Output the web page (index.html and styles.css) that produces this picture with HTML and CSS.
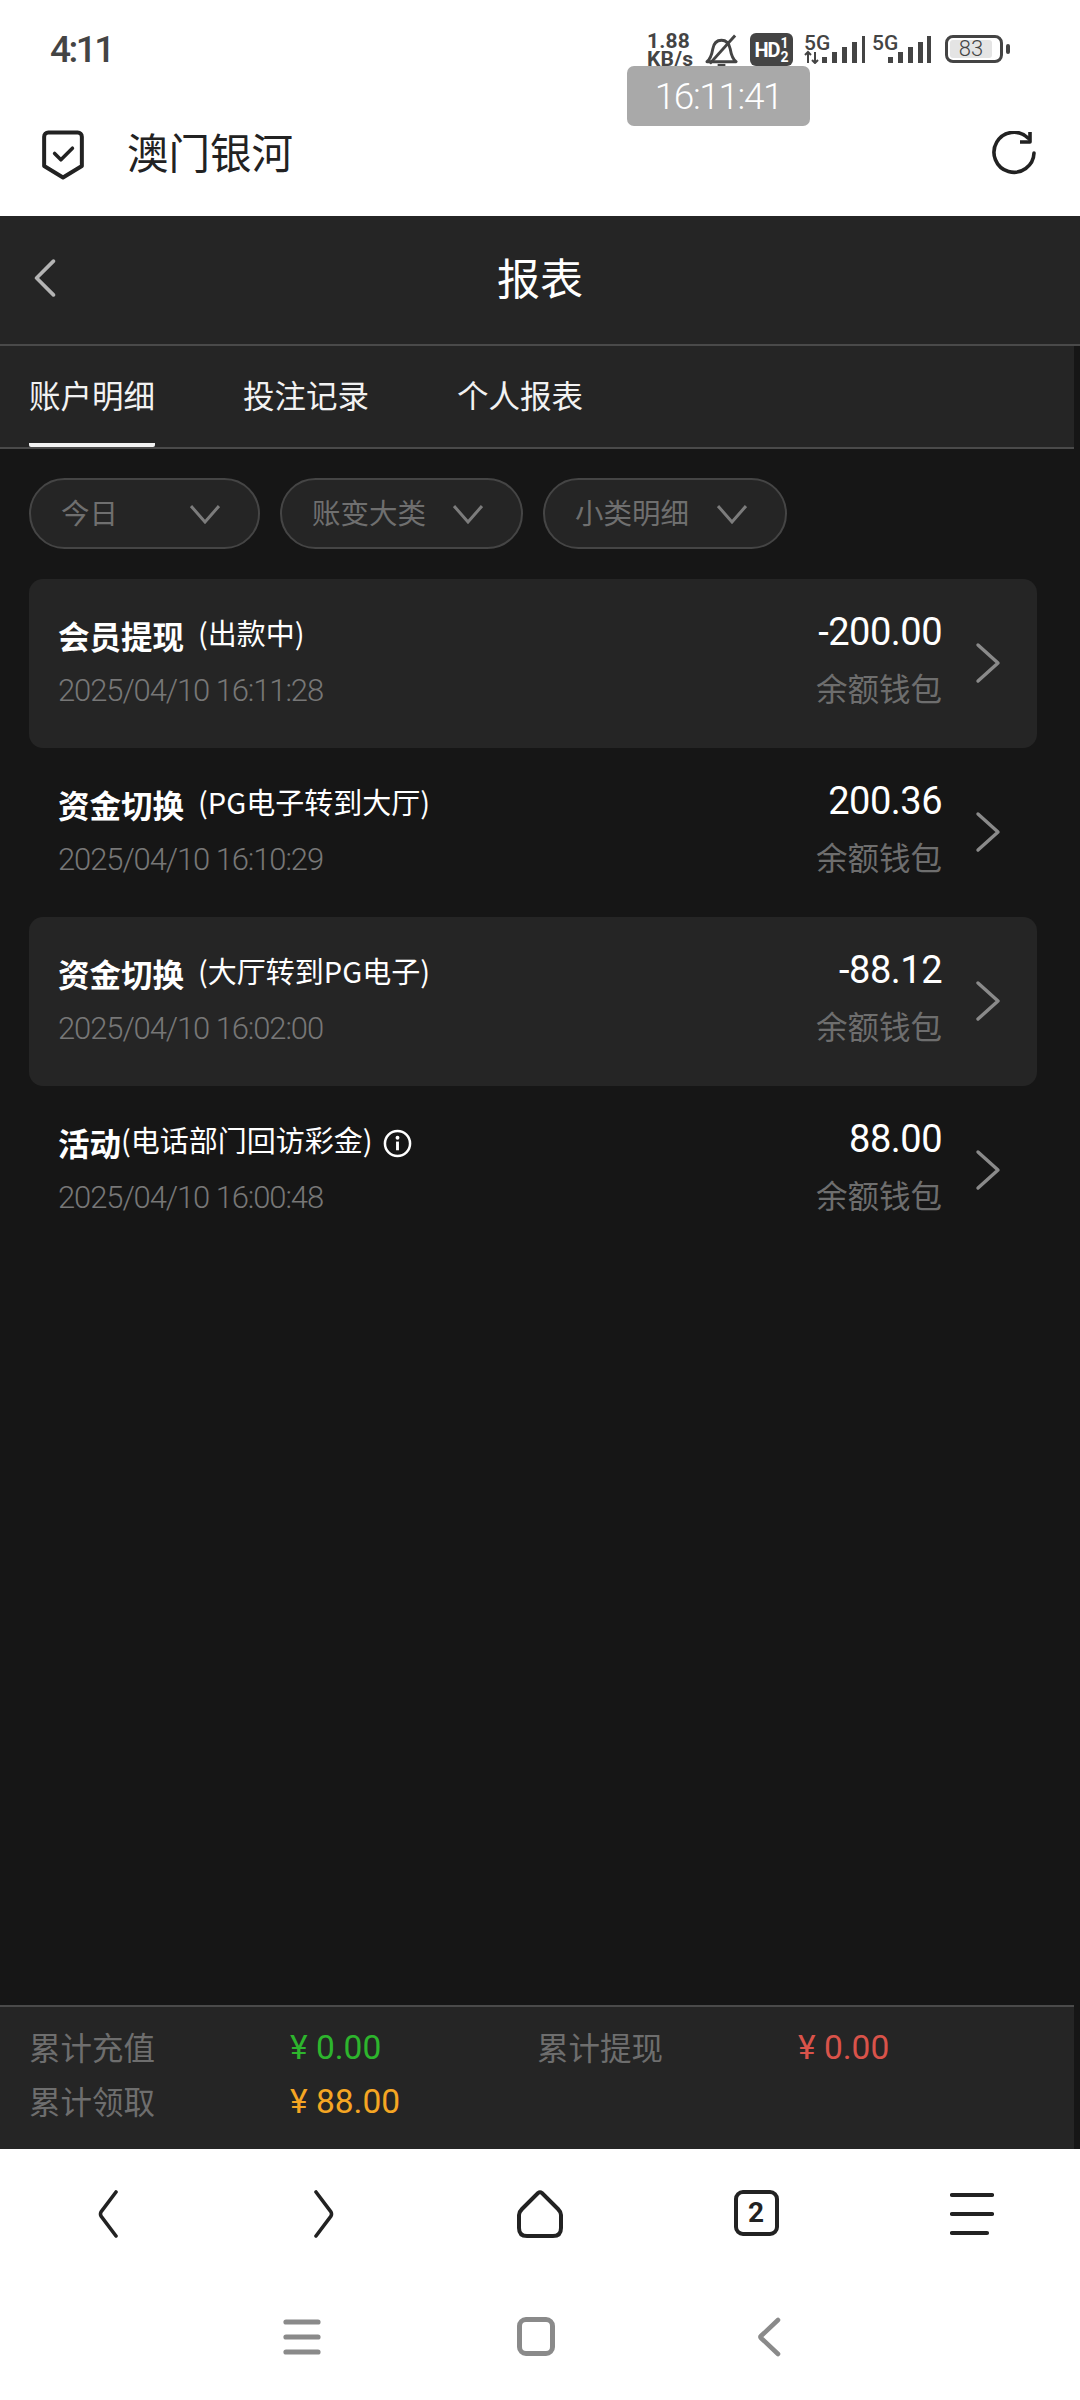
FILE: index.html
```html
<!DOCTYPE html>
<html lang="zh">
<head>
<meta charset="utf-8">
<title>报表</title>
<link rel="stylesheet" href="styles.css">
</head>
<body>
<div class="phone">
  <div class="status">
    <span class="clock">4:11</span>
    <div class="status-right">
      <span class="speed">1.88<br>KB/s</span>
      <svg class="ic-bell" viewBox="0 0 34 36"><path d="M2 29c4-3 5-7 6-13 1-6 4-9 9-9 6 0 8 4 9 9 1 6 2 10 6 13z" fill="none" stroke="#444" stroke-width="3" stroke-linejoin="round"/><path d="M13 33h8" stroke="#444" stroke-width="3.4"/><path d="M5 31L31 2" stroke="#444" stroke-width="3"/></svg>
      <span class="hd"><span class="hd-t">HD</span><span class="hd-n">1<br>2</span></span>
      <span class="net n1"><span class="g5">5G</span>
        <svg class="bars" viewBox="0 0 61 28"><path d="M4 16v11M1 19l3-3 3 3M11 27v-11M8 24l3 3 3-3" fill="none" stroke="#444" stroke-width="2"/><path d="M18 21h5v6h-5zM28 16h5v11h-5zM38 11h5v16h-5zM48 6h5v21h-5zM58 0h3.500v27h-3.500z" fill="#444"/></svg></span>
      <span class="net n2"><span class="g5">5G</span>
        <svg class="bars" viewBox="0 0 59 28"><path d="M16 21h5v6h-5zM26 16h5v11h-5zM36 11h5v16h-5zM46 6h5v21h-5zM55 0h4v27h-4z" fill="#444"/></svg></span>
      <span class="batt"><span class="batt-in">83</span></span><span class="batt-tip"></span>
    </div>
    <span class="toast">16:11:41</span>
  </div>

  <div class="addr">
    <svg class="shield" viewBox="0 0 42 48"><path d="M7 3h28a4 4 0 0 1 4 4v28l-18 11-18-11v-28a4 4 0 0 1 4-4z" fill="none" stroke="#222" stroke-width="3.8" stroke-linejoin="round"/><path d="M13 23l6 6 11-11" fill="none" stroke="#222" stroke-width="3.4" stroke-linecap="round" stroke-linejoin="round"/></svg>
    <span class="addr-title">澳门银河</span>
    <svg class="reload" viewBox="0 0 46 44"><path d="M42 22a20 20 0 1 1-6-15" fill="none" stroke="#222" stroke-width="3.6" stroke-linecap="round"/><path d="M38 1v10h-10" fill="none" stroke="#222" stroke-width="3.6" stroke-linejoin="round"/></svg>
  </div>

  <div class="app">
    <header class="top">
      <svg class="back" viewBox="0 0 22 36"><path d="M19 2L3 18l16 16" fill="none" stroke="#b4b4b4" stroke-width="3.4" stroke-linecap="round" stroke-linejoin="round"/></svg>
      <h1>报表</h1>
    </header>
    <nav class="tabs">
      <span class="tab active">账户明细</span>
      <span class="tab">投注记录</span>
      <span class="tab">个人报表</span>
    </nav>
    <div class="filters">
      <div class="pill p1"><span>今日</span><svg class="v" viewBox="0 0 30 20"><path d="M1 2l14 16L29 2" fill="none" stroke="#7c7c7c" stroke-width="3"/></svg></div>
      <div class="pill p2"><span>账变大类</span><svg class="v" viewBox="0 0 30 20"><path d="M1 2l14 16L29 2" fill="none" stroke="#7c7c7c" stroke-width="3"/></svg></div>
      <div class="pill p3"><span>小类明细</span><svg class="v" viewBox="0 0 30 20"><path d="M1 2l14 16L29 2" fill="none" stroke="#7c7c7c" stroke-width="3"/></svg></div>
    </div>
    <div class="list">
      <div class="row alt">
        <div class="left">
          <div class="line"><b>会员提现</b><span class="sub gap">(出款中)</span></div>
          <div class="date">2025/04/10 16:11:28</div>
        </div>
        <div class="right"><div class="amt">-200.00</div><div class="wallet">余额钱包</div></div>
        <svg class="chev" viewBox="0 0 26 42"><path d="M3 3l20 18L3 39" fill="none" stroke="#8a8a8a" stroke-width="3.4" stroke-linecap="round" stroke-linejoin="round"/></svg>
      </div>
      <div class="row">
        <div class="left">
          <div class="line"><b>资金切换</b><span class="sub gap">(PG电子转到大厅)</span></div>
          <div class="date">2025/04/10 16:10:29</div>
        </div>
        <div class="right"><div class="amt">200.36</div><div class="wallet">余额钱包</div></div>
        <svg class="chev" viewBox="0 0 26 42"><path d="M3 3l20 18L3 39" fill="none" stroke="#8a8a8a" stroke-width="3.4" stroke-linecap="round" stroke-linejoin="round"/></svg>
      </div>
      <div class="row alt">
        <div class="left">
          <div class="line"><b>资金切换</b><span class="sub gap">(大厅转到PG电子)</span></div>
          <div class="date">2025/04/10 16:02:00</div>
        </div>
        <div class="right"><div class="amt">-88.12</div><div class="wallet">余额钱包</div></div>
        <svg class="chev" viewBox="0 0 26 42"><path d="M3 3l20 18L3 39" fill="none" stroke="#8a8a8a" stroke-width="3.4" stroke-linecap="round" stroke-linejoin="round"/></svg>
      </div>
      <div class="row">
        <div class="left">
          <div class="line"><b>活动</b><span class="sub">(电话部门回访彩金)</span>
            <svg class="info" viewBox="0 0 30 30"><circle cx="15" cy="15" r="13" fill="none" stroke="#fff" stroke-width="2.6"/><circle cx="15" cy="9" r="2" fill="#fff"/><path d="M15 13v9" stroke="#fff" stroke-width="3"/></svg></div>
          <div class="date">2025/04/10 16:00:48</div>
        </div>
        <div class="right"><div class="amt">88.00</div><div class="wallet">余额钱包</div></div>
        <svg class="chev" viewBox="0 0 26 42"><path d="M3 3l20 18L3 39" fill="none" stroke="#8a8a8a" stroke-width="3.4" stroke-linecap="round" stroke-linejoin="round"/></svg>
      </div>
    </div>
    <footer class="sum">
      <span class="lab">累计充值</span><span class="val green">¥ 0.00</span>
      <span class="lab">累计提现</span><span class="val red">¥ 0.00</span>
      <span class="lab">累计领取</span><span class="val orange">¥ 88.00</span>
    </footer>
  </div>

  <div class="browser-nav">
    <svg class="n-chev" viewBox="0 0 22 48"><path d="M19 2L4 22q-1 2 0 4l15 20" fill="none" stroke="#222" stroke-width="3.6" stroke-linecap="round"/></svg>
    <svg class="n-chev" viewBox="0 0 22 48"><path d="M3 2l15 20q1 2 0 4L3 46" fill="none" stroke="#222" stroke-width="3.6" stroke-linecap="round"/></svg>
    <svg class="n-home" viewBox="0 0 46 48"><path d="M21 3q2-1.500 4 0L41 19q3 3 3 6v13q0 8-8 8H10q-8 0-8-8V25q0-3 3-6z" fill="none" stroke="#222" stroke-width="4"/></svg>
    <span class="n-tabs">2</span>
    <svg class="n-menu" viewBox="0 0 44 44"><path d="M2 3h40M2 22h40M2 41h35" stroke="#222" stroke-width="4.2" stroke-linecap="round"/></svg>
  </div>
  <div class="sys-nav">
    <svg class="s-menu" viewBox="0 0 38 36"><path d="M3 3h32M3 18h32M3 33h32" stroke="#8a8a8a" stroke-width="5.2" stroke-linecap="round"/></svg>
    <span class="s-home"></span>
    <svg class="s-back" viewBox="0 0 24 40"><path d="M21 3L4 19q-1 1 0 2l17 16" fill="none" stroke="#8a8a8a" stroke-width="4.6" stroke-linecap="round"/></svg>
  </div>
</div>
</body>
</html>
```
FILE: styles.css
```css
* { box-sizing: border-box; margin: 0; padding: 0; }
html, body { width: 1080px; height: 2400px; background: #fff; overflow: hidden; }
body { font-family: "Roboto", "Noto Sans CJK SC", sans-serif; }
.phone { width: 1080px; height: 2400px; display: flex; flex-direction: column; position: relative; }

.status { height: 126px; flex: none; display: flex; justify-content: space-between; align-items: flex-start; padding: 28px 70px 0 50px; position: relative; }
.clock { font-size: 37px; line-height: 44px; color: #444; font-weight: 500; letter-spacing: -2.500px; }
.status-right { display: flex; align-items: flex-start; color: #444; }
.speed { font-size: 21px; line-height: 17.500px; font-weight: 700; width: 47px; margin-top: 5px; white-space: nowrap; letter-spacing: 0.2px; }
.ic-bell { width: 33px; height: 36px; margin: 5px 0 0 11px; }
.hd { display: flex; align-items: center; justify-content: center; width: 43px; height: 33px; margin: 5px 0 0 12px; border-radius: 6px; background: #444; color: #fff; font-weight: 700; }
.hd-t { font-size: 20px; letter-spacing: -1px; }
.hd-n { font-size: 14px; line-height: 14px; margin-left: 1px; }
.net { display: grid; margin-top: 8px; height: 28px; }
.net > * { grid-area: 1 / 1; }
.n1 { width: 61px; margin-left: 11px; }
.n2 { width: 59px; margin-left: 7px; }
.g5 { font-size: 21px; font-weight: 500; line-height: 15px; color: #444; }
.bars { width: 100%; height: 28px; }
.batt { width: 58px; height: 28px; border: 3px solid #444; border-radius: 8px; margin: 7px 0 0 14px; padding: 2px; display: flex; }
.batt-in { width: 42px; background: #e4e4e4; font-size: 22px; line-height: 18px; color: #444; text-align: center; border-radius: 3px; font-weight: 300; }
.batt-tip { width: 4px; height: 10px; background: #444; margin: 16px 0 0 3px; border-radius: 2px; }
.toast { position: absolute; left: 627px; top: 66px; width: 183px; height: 60px; background: #a9a9a9; border-radius: 7px; color: #fff; font-size: 37px; font-weight: 300; line-height: 62px; letter-spacing: -1.400px; text-align: center; }

.addr { height: 90px; flex: none; display: flex; align-items: flex-start; padding: 3px 42px 0 41px; }
.shield { width: 44px; height: 51px; flex: none; }
.addr-title { font-size: 41.500px; line-height: 44px; color: #222; margin-left: 42px; font-family: "Noto Sans CJK SC", sans-serif; font-weight: 400; }
.reload { width: 46px; height: 44px; margin-left: auto; margin-top: 2px; }

.app { flex: 1; background: #161616; display: flex; flex-direction: column; min-height: 0; }
.top { height: 130px; flex: none; background: #252525; border-bottom: 2px solid #4a4a4a; position: relative; display: flex; align-items: center; justify-content: center; }
.top h1 { font-size: 43px; font-weight: 400; color: #fff; font-family: "Noto Sans CJK SC", sans-serif; margin-top: -8px; }
.back { position: absolute; left: 33px; top: 43px; width: 24px; height: 38px; }
.tabs { height: 103px; flex: none; background: #252525; border-bottom: 2px solid #4a4a4a; display: flex; gap: 88px; padding-left: 29px; margin-right: 6px; }
.tab { height: 101px; font-size: 31.500px; line-height: 96px; color: #f2f2f2; font-family: "Noto Sans CJK SC", sans-serif; font-weight: 400; width: 126px; white-space: nowrap; }
.tab.active { border-bottom: 4px solid #f2f2f2; border-radius: 0 0 2px 2px; }

.filters { display: flex; gap: 20px; padding: 29px 0 0 29px; height: 130px; flex: none; }
.pill { height: 71px; border: 2px solid #454545; border-radius: 36px; background: #252525; display: flex; align-items: center; font-size: 28.500px; line-height: 34px; color: #6f6f6f; font-family: "Noto Sans CJK SC", sans-serif; padding: 0 38px 3px 30px; }
.p1 { width: 231px; }
.p2 { width: 243px; }
.p3 { width: 244px; }
.v { width: 30px; height: 20px; flex: none; margin: 3px 0 0 auto; }

.list { flex: 1; padding: 0 43px 0 29px; min-height: 0; }
.row { height: 169px; border-radius: 14px; display: flex; align-items: flex-start; padding: 34px 36px 0 29px; }
.row.alt { background: #252525; }
.left { flex: 1; }
.line { display: flex; align-items: flex-start; height: 46px; color: #fff; white-space: nowrap; }
.line b { font-size: 31.500px; line-height: 44px; font-family: "Noto Sans CJK SC", sans-serif; font-weight: 700; }
.sub { font-size: 29px; line-height: 38px; font-family: "Noto Sans CJK SC", sans-serif; font-weight: 400; }
.gap { margin-left: 14px; }
.info { width: 29px; height: 29px; margin: 9px 0 0 10px; }
.date { font-size: 31px; line-height: 40px; color: #777; font-weight: 300; letter-spacing: -1.100px; margin-top: 12px; }
.right { text-align: right; }
.amt { font-size: 38px; line-height: 42px; color: #fff; font-weight: 400; letter-spacing: -0.500px; margin-top: -2px; }
.wallet { font-size: 31.500px; line-height: 40px; color: #6e6e6e; font-family: "Noto Sans CJK SC", sans-serif; margin-top: 14px; }
.chev { width: 26px; height: 42px; flex: none; margin: 29px 0 0 33px; }

.sum { height: 144px; flex: none; background: #252525; border-top: 2px solid #4a4a4a; margin-right: 6px; display: grid; grid-template-columns: 261px 247px 261px 1fr; grid-auto-rows: 54px; padding: 12px 0 0 29px; align-items: center; }
.lab { font-size: 31.500px; line-height: 44px; color: #6e6e6e; font-family: "Noto Sans CJK SC", sans-serif; }
.val { font-size: 33.500px; line-height: 44px; font-weight: 400; margin-top: 3px; }
.green { color: #2db52d; }
.red { color: #d9534a; }
.orange { color: #f5a623; }

.browser-nav { height: 165px; flex: none; position: relative; display: grid; grid-template-columns: repeat(5, 216px); justify-items: center; padding-top: 41px; align-items: start; }
.n-chev { width: 22px; height: 48px; }
.n-home { width: 46px; height: 48px; }
.n-tabs { width: 45px; height: 46px; border: 4px solid #222; border-radius: 9px; font-size: 28px; line-height: 38px; font-weight: 700; color: #222; text-align: center; }
.n-menu { width: 44px; height: 44px; margin-top: 2px; }
.sys-nav { height: 86px; flex: none; position: relative; display: flex; padding-top: 3px; }
.s-menu { width: 38px; height: 36px; margin-left: 283px; margin-top: 2px; }
.s-home { width: 38px; height: 39px; border: 5px solid #8a8a8a; border-radius: 9px; margin-left: 196px; }
.s-back { width: 24px; height: 40px; margin-left: 202px; }
```
